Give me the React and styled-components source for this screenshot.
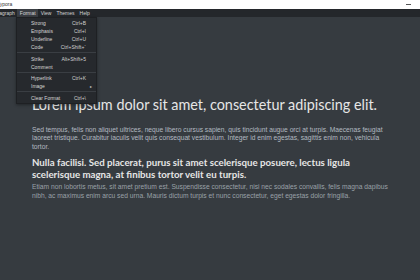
import React from "react";
import styled, { createGlobalStyle } from "styled-components";

const Global = createGlobalStyle`
  html, body { margin: 0; padding: 0; width: 420px; height: 280px; overflow: hidden; background: #363b40; }
  #root { width: 420px; height: 280px; }
`;

const Window = styled.div`
  position: relative;
  width: 420px;
  height: 280px;
  display: flex;
  flex-direction: column;
  background: #363b40;
  font-family: "Liberation Sans", Arial, sans-serif;
  overflow: hidden;
`;

const TitleBar = styled.div`
  height: 9px;
  flex: none;
  background: #ffffff;
  display: flex;
  align-items: center;
  justify-content: space-between;
  padding-right: 9px;
`;

const Title = styled.span`
  font-size: 5px;
  color: #333;
  margin-left: -3px;
  line-height: 9px;
`;

const Minimize = styled.span`
  width: 5px;
  height: 1px;
  background: #555;
`;

const MenuBar = styled.div`
  height: 8px;
  flex: none;
  background: #24272b;
  display: flex;
  align-items: center;
`;

const MenuItem = styled.span`
  font-size: 5px;
  line-height: 8px;
  color: #d4d4d4;
  padding: 0 2.5px;
  height: 8px;
  background: ${(p) => (p.$active ? "#3b3f44" : "transparent")};
  &:first-child { margin-left: -11px; }
`;

const Content = styled.main`
  flex: 1;
  padding: 78px 32px 0 32px;
  color: #b8bfc6;
`;

const H1 = styled.h1`
  margin: 0 0 11px;
  font-family: Lato, "Open Sans", sans-serif;
  font-weight: 400;
  font-size: 14.4px;
  line-height: 20px;
  color: #e6e6e6;
  white-space: nowrap;
`;

const P = styled.p`
  margin: 0 0 5px;
  font-size: 6.7px;
  line-height: 8.3px;
  color: ${(p) => (p.$dim ? "#9aa1a8" : "#b3bac1")};
`;

const H2 = styled.h2`
  margin: 0 0 3.5px;
  font-family: Lato, "Open Sans", sans-serif;
  font-weight: 700;
  font-size: 9.7px;
  line-height: 12px;
  color: #e6e6e6;
`;

const Dropdown = styled.div`
  position: absolute;
  left: 16px;
  top: 17px;
  width: 81px;
  padding: 1px 0;
  background: #26292d;
  border: 1px solid #1e2023;
  box-shadow: 0 1px 3px rgba(0, 0, 0, 0.4);
  box-sizing: border-box;
  display: flex;
  flex-direction: column;
`;

const DItem = styled.div`
  height: 8px;
  display: flex;
  align-items: center;
  justify-content: space-between;
  padding: 0 10px 0 14px;
  font-size: 5px;
  color: #d6d6d6;
  position: relative;
`;

const Shortcut = styled.span`
  color: #d0d0d0;
`;

const Arrow = styled.span`
  position: absolute;
  right: 4px;
  font-size: 4px;
  color: #cfcfcf;
`;

const Sep = styled.div`
  height: 1px;
  margin: 1px 0 1.5px;
  background: #3a3e43;
`;

export default function App() {
  return (
    <>
      <Global />
      <Window>
        <TitleBar>
          <Title>Typora</Title>
          <Minimize />
        </TitleBar>
        <MenuBar>
          <MenuItem>Paragraph</MenuItem>
          <MenuItem $active>Format</MenuItem>
          <MenuItem>View</MenuItem>
          <MenuItem>Themes</MenuItem>
          <MenuItem>Help</MenuItem>
        </MenuBar>
        <Content>
          <H1>Lorem ipsum dolor sit amet, consectetur adipiscing elit.</H1>
          <P>
            Sed tempus, felis non aliquet ultrices, neque libero cursus sapien, quis tincidunt augue orci at turpis. Maecenas feugiat
            laoreet tristique. Curabitur iaculis velit quis consequat vestibulum. Integer id enim egestas, sagittis enim non, vehicula
            tortor.
          </P>
          <H2>
            Nulla facilisi. Sed placerat, purus sit amet scelerisque posuere, lectus ligula scelerisque magna, at finibus tortor velit eu turpis.
          </H2>
          <P $dim>
            Etiam non lobortis metus, sit amet pretium est. Suspendisse consectetur, nisi nec sodales convallis, felis magna dapibus
            nibh, ac maximus enim arcu sed urna. Mauris dictum turpis et nunc consectetur, eget egestas dolor fringilla.
          </P>
        </Content>
        <Dropdown>
          <DItem><span>Strong</span><Shortcut>Ctrl+B</Shortcut></DItem>
          <DItem><span>Emphasis</span><Shortcut>Ctrl+I</Shortcut></DItem>
          <DItem><span>Underline</span><Shortcut>Ctrl+U</Shortcut></DItem>
          <DItem><span>Code</span><Shortcut>Ctrl+Shift+`</Shortcut></DItem>
          <Sep />
          <DItem><span>Strike</span><Shortcut>Alt+Shift+5</Shortcut></DItem>
          <DItem><span>Comment</span></DItem>
          <Sep />
          <DItem><span>Hyperlink</span><Shortcut>Ctrl+K</Shortcut></DItem>
          <DItem><span>Image</span><Arrow>▸</Arrow></DItem>
          <Sep />
          <DItem><span>Clear Format</span><Shortcut>Ctrl+\</Shortcut></DItem>
        </Dropdown>
      </Window>
    </>
  );
}
